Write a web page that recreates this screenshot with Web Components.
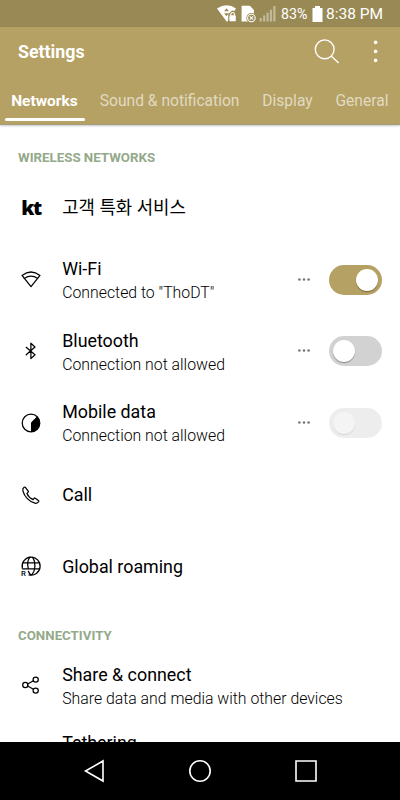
<!DOCTYPE html>
<html lang="en">
<head>
<meta charset="utf-8">
<title>Settings</title>
<style>
  html, body {
    margin: 0;
    height: 100%;
    overflow: hidden;
    background: #fff;
    font-family: Roboto, "Noto Sans CJK KR", sans-serif;
  }
</style>
</head>
<body>
<settings-screen></settings-screen>

<script>
const define = (name, html, setup) => {
  const template = document.createElement("template");
  template.innerHTML = html;
  customElements.define(name, class extends HTMLElement {
    constructor() {
      super();
      this.attachShadow({ mode: "open" }).appendChild(template.content.cloneNode(true));
    }
    connectedCallback() {
      if (setup) setup(this, this.shadowRoot);
    }
  });
};

const stroke = 'fill="none" stroke="currentColor" stroke-width="1.25" stroke-linejoin="round" stroke-linecap="round"';

// every row icon is drawn on a 20x20 box
const icons = {
  wifi: `<g ${stroke}><path d="M1 5.4Q10 -1.4 19 5.4L10 16.6Z"/><path d="M3.3 8.4Q10 3.8 16.7 8.4"/></g>`,
  bluetooth: `<path ${stroke} d="M5.2 6.3 14 13.8 9.9 17.6V2.2L14 6 5.2 13.8"/>`,
  data: `<circle cx="10" cy="10" r="8.8" ${stroke}/><path fill="currentColor" d="M10 18.8V9.4L16 3.4A8.9 8.9 0 0 1 10 18.8Z"/>`,
  call: `<path ${stroke} d="M3.1 2.2C1.8 3 1.5 4.1 1.9 5.8 3.4 11.7 8.1 16.8 14 18.2 15.8 18.5 17 17.8 17.8 16.5 18 16.1 17.8 15.7 17.4 15.4L14.3 13.2C13.9 12.9 13.4 13 13.1 13.3L12 14.6C9.6 13.5 7 10.9 6 8.4L7.1 7.2C7.5 6.8 7.5 6.4 7.2 6L4.4 2.4C4 2 3.6 1.9 3.1 2.2Z"/>`,
  roaming: `<g ${stroke} transform="translate(0 -1)"><path d="M1.3 11.8A9 9 0 1 1 8 18.8"/><path d="M7.2 11.8C6.2 7.8 7 3.6 9 1.2M11.6 1.2C14.8 6 14.8 14 11 18.6M7.4 15.3C8 17.3 9 18.3 10 18.8M2 6.8H18.6M1.4 12.8H18.7"/></g><text x="0" y="18.5" font-family="Roboto" font-size="7.8" font-weight="500" fill="currentColor">R</text>`,
  share: `<g ${stroke}><path d="M6.7 9 12.4 5.8M6.7 11 12.4 14.2"/><circle cx="4.3" cy="10" r="2.6"/><circle cx="14.7" cy="4.6" r="2.6"/><circle cx="14.7" cy="15.6" r="2.6"/></g>`
};

define("status-bar", `
  <style>
    :host { display: flex; flex: none; box-sizing: border-box; height: 27px; padding-right: 17.5px;
      align-items: center; justify-content: flex-end; background: #998a55; color: #fff; }
    svg { display: block; flex: none; }
    .battery-text { margin: 0 4px 0 5px; font-size: 14.2px; width: 27px; white-space: nowrap; }
    .clock { margin-left: 3px; font-size: 15.5px; width: 56.5px; white-space: nowrap; padding-top: 1px; }
  </style>
  <svg width="59" height="20" viewBox="0 0 59 20">
    <path fill="#fff" d="M0 4.6Q10 -2.2 19 4.6L10 18Z"/>
    <path fill="#998a55" d="m9.5 4.2 2.4 3H7.1ZM7.1 9.3h4.8l-2.4 3Z"/>
    <path fill="#998a55" d="M11.2 10 13 8.2Q15.7 5 18.2 8.2L20 10V19H11.2Z"/>
    <rect x="12.4" y="11.3" width="6.4" height="5.9" rx=".6" fill="#fff"/>
    <path fill="none" stroke="#fff" stroke-width="1.2" d="M13.8 11.6V10.3a1.8 1.8 0 0 1 3.6 0v1.3"/>
    <path fill="#fff" d="M24.6 1.8h8.3l4 4.2V17.4H24.6Z"/>
    <circle cx="34.4" cy="14" r="5.1" fill="#998a55"/>
    <circle cx="34.4" cy="14" r="3.8" fill="none" stroke="#fff" stroke-width="1.1"/>
    <path stroke="#fff" stroke-width="1.1" d="m32.7 12.3 3.4 3.4m0-3.4-3.4 3.4"/>
    <path fill="#fff" fill-opacity=".4" d="M42.6 14h2.2v3.6h-2.2ZM46.1 11.5h2.2v6.1h-2.2ZM49.5 8.7h2.2v8.9h-2.2ZM52.9 5.7h2.2v11.9h-2.2ZM56.3 2h2.2v15.6h-2.2Z"/>
  </svg>
  <span class="battery-text">83%</span>
  <svg width="11" height="16" viewBox="0 0 11 16"><path fill="#fff" d="M3 0h5v2h2.5v14H.5V2H3Z"/></svg>
  <span class="clock">8:38 PM</span>
`);

define("app-bar", `
  <style>
    :host { display: flex; flex-direction: column; flex: none; box-sizing: border-box; height: 98px;
      background: #b5a163; color: #fff; border-bottom: 1px solid #a59b76;
      box-shadow: 0 1px 2px rgba(60, 70, 80, .3); position: relative; }
    .top { display: flex; height: 49px; align-items: center; padding: 0 20px 0 18px; }
    h1 { margin: 0; flex: 1; font-size: 17.8px; font-weight: 700; }
    .search { margin-right: 32px; }
    svg { display: block; }
    .tabs { display: flex; flex: 1; padding-left: 4.5px; }
  </style>
  <div class="top">
    <h1>Settings</h1>
    <svg class="search" width="26" height="26" viewBox="0 0 26 26" fill="none" stroke="#fff" stroke-width="1.4">
      <circle cx="10.7" cy="10.3" r="9.4"/><path d="m17.2 17 7.4 7"/>
    </svg>
    <svg width="8" height="24" viewBox="0 0 8 24" fill="#fff">
      <circle cx="3.6" cy="2.4" r="1.8"/><circle cx="3.6" cy="11.4" r="1.8"/><circle cx="3.6" cy="20.4" r="1.8"/>
    </svg>
  </div>
  <nav class="tabs"><slot></slot></nav>
`);

define("tab-item", `
  <style>
    :host { display: flex; flex: none; flex-direction: column; box-sizing: border-box; height: 45px;
      justify-content: space-between; padding-top: 14px; margin-right: 22.8px;
      color: rgba(255, 255, 255, .62); font-size: 15.6px; line-height: 22px; white-space: nowrap; }
    :host([active]) { color: #fff; font-weight: 700; font-size: 15.5px; width: 80px; margin-right: 15.3px; text-align: center; }
    i { display: block; height: 3px; border-radius: 2px; }
    :host([active]) i { background: #fff; }
  </style>
  <span><slot></slot></span><i></i>
`);

define("section-title", `
  <style>
    :host { display: block; box-sizing: border-box; height: 47px; padding: 25px 18px 0;
      color: #94a98a; font-size: 13.3px; font-weight: 700; line-height: 16px; white-space: nowrap; }
  </style>
  <slot></slot>
`);

define("toggle-switch", `
  <style>
    :host { display: flex; box-sizing: border-box; width: 53px; height: 30px; padding: 4px;
      border-radius: 15px; background: #d2d2d2; align-items: center; }
    i { width: 22px; height: 22px; border-radius: 50%; background: #fff; box-shadow: 0 1px 1px rgba(0, 0, 0, .35); }
    :host([on]) { justify-content: flex-end; background: #b5a163; }
    :host([disabled]) { background: #ededed; }
    :host([disabled]) i { background: #f4f4f4; box-shadow: 0 1px 1px rgba(0, 0, 0, .1); }
  </style>
  <i></i>
`);

define("settings-row", `
  <style>
    :host { display: flex; box-sizing: border-box; height: 71.75px; padding: 0 18px 0 21px; align-items: center; color: #000; }
    .icon { display: flex; width: 20px; margin-right: 21.2px; justify-content: center; align-items: center; }
    .icon svg { display: block; overflow: visible; }
    .kt { font: 800 20px/24px "Open Sans", sans-serif; letter-spacing: -1.4px; }
    .text { flex: 1; white-space: nowrap; padding-top: 1px; }
    .text:has(.note:not(:empty)) { padding-top: 2.6px; }
    .title { font-size: 17.85px; line-height: 24px; }
    .note { font-size: 15.82px; line-height: 24px; font-weight: 300; color: #000; }
    .more { margin-right: 19px; }
    .more:not(.shown), .note:empty { display: none; }
  </style>
  <div class="icon"></div>
  <div class="text">
    <div class="title"><slot></slot></div>
    <div class="note"></div>
  </div>
  <svg class="more" width="12" height="4" viewBox="0 0 12 4" fill="#777">
    <circle cx="1.4" cy="1.5" r="1.3"/><circle cx="6" cy="1.5" r="1.3"/><circle cx="10.6" cy="1.5" r="1.3"/>
  </svg>
  <slot name="control"></slot>
`, (host, root) => {
  const icon = host.getAttribute("icon");
  if (icon === "kt") {
    root.querySelector(".icon").innerHTML = '<span class="kt">kt</span>';
  } else if (icons[icon]) {
    root.querySelector(".icon").innerHTML = `<svg width="20" height="20" viewBox="0 0 20 20">${icons[icon]}</svg>`;
  }
  root.querySelector(".note").textContent = host.getAttribute("note") || "";
  root.querySelector(".more").classList.toggle("shown", host.hasAttribute("more"));
});

define("navigation-bar", `
  <style>
    :host { display: flex; flex: none; box-sizing: border-box; height: 58px; background: #000;
      align-items: center; justify-content: space-between; padding: 0 83px; }
    svg { display: block; }
  </style>
  <svg width="22" height="24" viewBox="0 0 22 24" fill="none" stroke="#fff" stroke-width="1.6"><path d="M20 2V22L2.5 12Z"/></svg>
  <svg width="24" height="24" viewBox="0 0 24 24" fill="none" stroke="#fff" stroke-width="1.6"><circle cx="12" cy="12" r="10.2"/></svg>
  <svg width="22" height="22" viewBox="0 0 22 22" fill="none" stroke="#fff" stroke-width="1.6"><path d="M1 1H21V21H1Z"/></svg>
`);

define("settings-screen", `
  <style>
    :host { display: flex; flex-direction: column; width: 400px; height: 800px; overflow: hidden; background: #fff; }
    main { flex: 1; min-height: 0; overflow: hidden; }
    .next { align-items: flex-start; padding-top: 9px; }
  </style>
  <status-bar></status-bar>
  <app-bar>
    <tab-item active>Networks</tab-item>
    <tab-item>Sound &amp; notification</tab-item>
    <tab-item>Display</tab-item>
    <tab-item>General</tab-item>
  </app-bar>
  <main>
    <section-title>WIRELESS NETWORKS</section-title>
    <settings-row icon="kt">고객 특화 서비스</settings-row>
    <settings-row icon="wifi" note='Connected to "ThoDT"' more>Wi-Fi<toggle-switch slot="control" on></toggle-switch></settings-row>
    <settings-row icon="bluetooth" note="Connection not allowed" more>Bluetooth<toggle-switch slot="control"></toggle-switch></settings-row>
    <settings-row icon="data" note="Connection not allowed" more>Mobile data<toggle-switch slot="control" disabled></toggle-switch></settings-row>
    <settings-row icon="call">Call</settings-row>
    <settings-row icon="roaming">Global roaming</settings-row>
    <section-title>CONNECTIVITY</section-title>
    <settings-row icon="share" note="Share data and media with other devices">Share &amp; connect</settings-row>
    <settings-row class="next">Tethering</settings-row>
  </main>
  <navigation-bar></navigation-bar>
`);
</script>
</body>
</html>
